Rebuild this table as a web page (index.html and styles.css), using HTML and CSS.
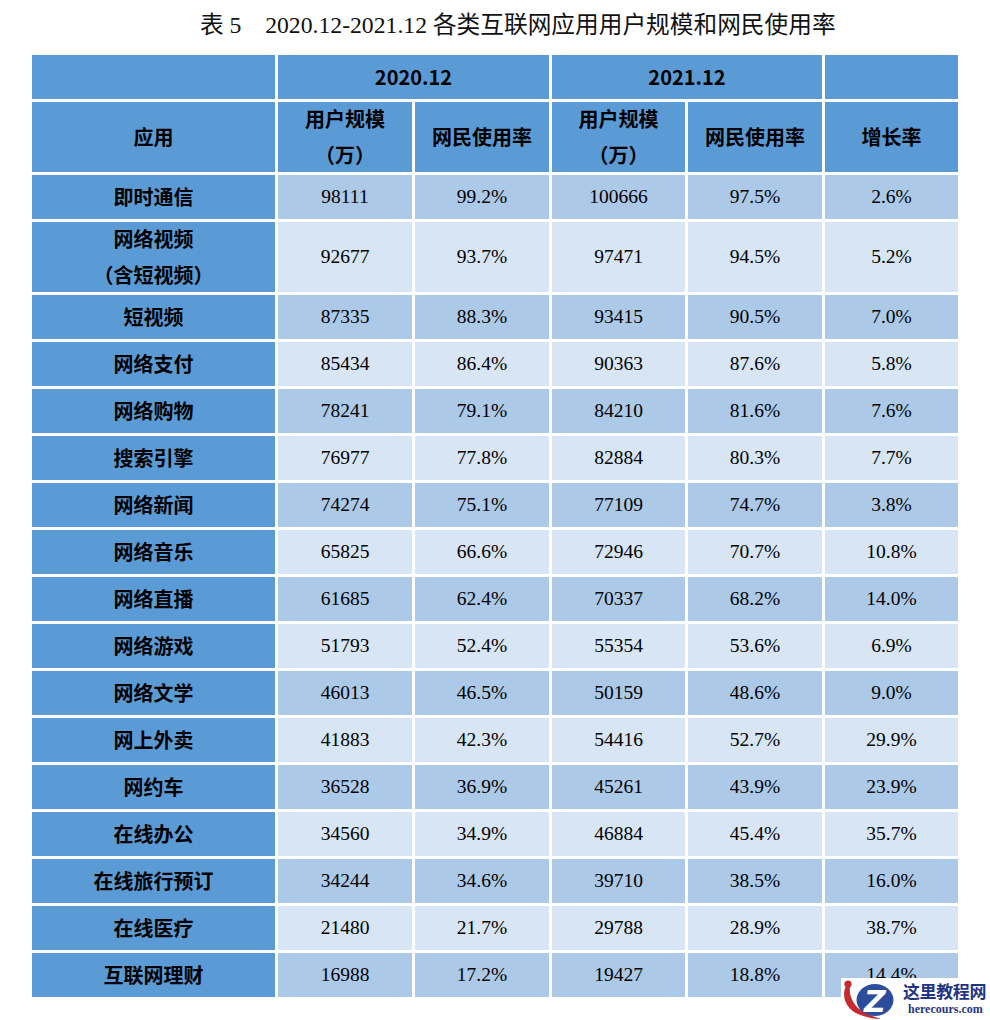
FILE: index.html
```html
<!DOCTYPE html>
<html lang="zh-CN">
<head>
<meta charset="utf-8">
<title>表 5 各类互联网应用用户规模和网民使用率</title>
<link rel="stylesheet" href="styles.css">
</head>
<body>
<div class="page">
  <h1 class="title">表 5&emsp;2020.12-2021.12 各类互联网应用用户规模和网民使用率</h1>
  <div class="table">
    <div class="hd"></div>
    <div class="hd span2">2020.12</div>
    <div class="hd span2">2021.12</div>
    <div class="hd"></div>

    <div class="hd">应用</div>
    <div class="hd">用户规模<br>（万）</div>
    <div class="hd">网民使用率</div>
    <div class="hd">用户规模<br>（万）</div>
    <div class="hd">网民使用率</div>
    <div class="hd">增长率</div>

    <div class="lbl">即时通信</div><div class="c a">98111</div><div class="c a">99.2%</div><div class="c a">100666</div><div class="c a">97.5%</div><div class="c a">2.6%</div>
    <div class="lbl">网络视频<br>（含短视频）</div><div class="c b">92677</div><div class="c b">93.7%</div><div class="c b">97471</div><div class="c b">94.5%</div><div class="c b">5.2%</div>
    <div class="lbl">短视频</div><div class="c a">87335</div><div class="c a">88.3%</div><div class="c a">93415</div><div class="c a">90.5%</div><div class="c a">7.0%</div>
    <div class="lbl">网络支付</div><div class="c b">85434</div><div class="c b">86.4%</div><div class="c b">90363</div><div class="c b">87.6%</div><div class="c b">5.8%</div>
    <div class="lbl">网络购物</div><div class="c a">78241</div><div class="c a">79.1%</div><div class="c a">84210</div><div class="c a">81.6%</div><div class="c a">7.6%</div>
    <div class="lbl">搜索引擎</div><div class="c b">76977</div><div class="c b">77.8%</div><div class="c b">82884</div><div class="c b">80.3%</div><div class="c b">7.7%</div>
    <div class="lbl">网络新闻</div><div class="c a">74274</div><div class="c a">75.1%</div><div class="c a">77109</div><div class="c a">74.7%</div><div class="c a">3.8%</div>
    <div class="lbl">网络音乐</div><div class="c b">65825</div><div class="c b">66.6%</div><div class="c b">72946</div><div class="c b">70.7%</div><div class="c b">10.8%</div>
    <div class="lbl">网络直播</div><div class="c a">61685</div><div class="c a">62.4%</div><div class="c a">70337</div><div class="c a">68.2%</div><div class="c a">14.0%</div>
    <div class="lbl">网络游戏</div><div class="c b">51793</div><div class="c b">52.4%</div><div class="c b">55354</div><div class="c b">53.6%</div><div class="c b">6.9%</div>
    <div class="lbl">网络文学</div><div class="c a">46013</div><div class="c a">46.5%</div><div class="c a">50159</div><div class="c a">48.6%</div><div class="c a">9.0%</div>
    <div class="lbl">网上外卖</div><div class="c b">41883</div><div class="c b">42.3%</div><div class="c b">54416</div><div class="c b">52.7%</div><div class="c b">29.9%</div>
    <div class="lbl">网约车</div><div class="c a">36528</div><div class="c a">36.9%</div><div class="c a">45261</div><div class="c a">43.9%</div><div class="c a">23.9%</div>
    <div class="lbl">在线办公</div><div class="c b">34560</div><div class="c b">34.9%</div><div class="c b">46884</div><div class="c b">45.4%</div><div class="c b">35.7%</div>
    <div class="lbl">在线旅行预订</div><div class="c a">34244</div><div class="c a">34.6%</div><div class="c a">39710</div><div class="c a">38.5%</div><div class="c a">16.0%</div>
    <div class="lbl">在线医疗</div><div class="c b">21480</div><div class="c b">21.7%</div><div class="c b">29788</div><div class="c b">28.9%</div><div class="c b">38.7%</div>
    <div class="lbl">互联网理财</div><div class="c a">16988</div><div class="c a">17.2%</div><div class="c a">19427</div><div class="c a">18.8%</div><div class="c a">14.4%</div>
  </div>

  <div class="watermark">
    <svg class="wm-logo" width="62" height="42" viewBox="0 0 62 42">
      <path d="M5 8 C0 18 5 31 17 36 C24 39 32 41 40 41 C31 38 23 35 17 30 C11 24 8 16 9 9 Z" fill="#c62a2f"/>
      <circle cx="7" cy="6" r="3.6" fill="#c62a2f"/>
      <ellipse cx="34" cy="22" rx="18.5" ry="16" fill="#2c4c9c"/>
      <text x="34" y="34" text-anchor="middle" class="wm-z">Z</text>
    </svg>
    <div class="wm-text">
      <div class="wm-cn">这里教程网</div>
      <div class="wm-en">herecours.com</div>
    </div>
  </div>
</div>
</body>
</html>
```

FILE: styles.css
```css
html, body {
  margin: 0;
  padding: 0;
  background: #ffffff;
}

.page {
  position: relative;
  width: 990px;
  height: 1020px;
  overflow: hidden;
}

.title {
  margin: 0 0 15px 0;
  padding: 10px 0 0 200px;
  height: 30px;
  line-height: 30px;
  text-align: left;
  white-space: nowrap;
  font-family: "Liberation Serif", "Noto Sans CJK SC", serif;
  font-weight: 400;
  font-size: 23.7px;
  color: #111111;
}

.table {
  margin-left: 32px;
  display: grid;
  grid-template-columns: 243px 134px 134px 133px 134px 133px;
  grid-template-rows: 44px 70px 44px 70px repeat(15, 44px);
  gap: 3px;
}

.table > div {
  display: flex;
  align-items: center;
  justify-content: center;
  text-align: center;
  color: #000000;
}

.hd,
.lbl {
  background: #5b9bd5;
  font-family: "Noto Sans CJK SC", sans-serif;
  font-weight: 700;
  font-size: 20px;
  line-height: 36px;
}

.span2 {
  grid-column: span 2;
}

.c {
  font-family: "Liberation Serif", serif;
  font-size: 19.5px;
}

.a {
  background: #adc9e8;
}

.b {
  background: #d7e5f4;
}

.watermark {
  position: absolute;
  left: 841px;
  top: 978px;
  width: 149px;
  height: 42px;
  background: #ffffff;
  display: flex;
  align-items: flex-start;
}

.wm-logo {
  flex: none;
  display: block;
}

.wm-z {
  font-family: "DejaVu Sans", sans-serif;
  font-weight: 700;
  font-style: italic;
  font-size: 30px;
  fill: #ffffff;
}

.wm-text {
  display: flex;
  flex-direction: column;
  align-items: flex-start;
  padding-top: 2px;
}

.wm-cn {
  font-family: "Noto Sans CJK SC", sans-serif;
  font-weight: 700;
  font-size: 17px;
  line-height: 21px;
  color: #1e3584;
  letter-spacing: -0.4px;
}

.wm-en {
  font-family: "Liberation Serif", serif;
  font-weight: 700;
  font-size: 12px;
  line-height: 16px;
  color: #1e3584;
  margin-left: 5px;
}
```
